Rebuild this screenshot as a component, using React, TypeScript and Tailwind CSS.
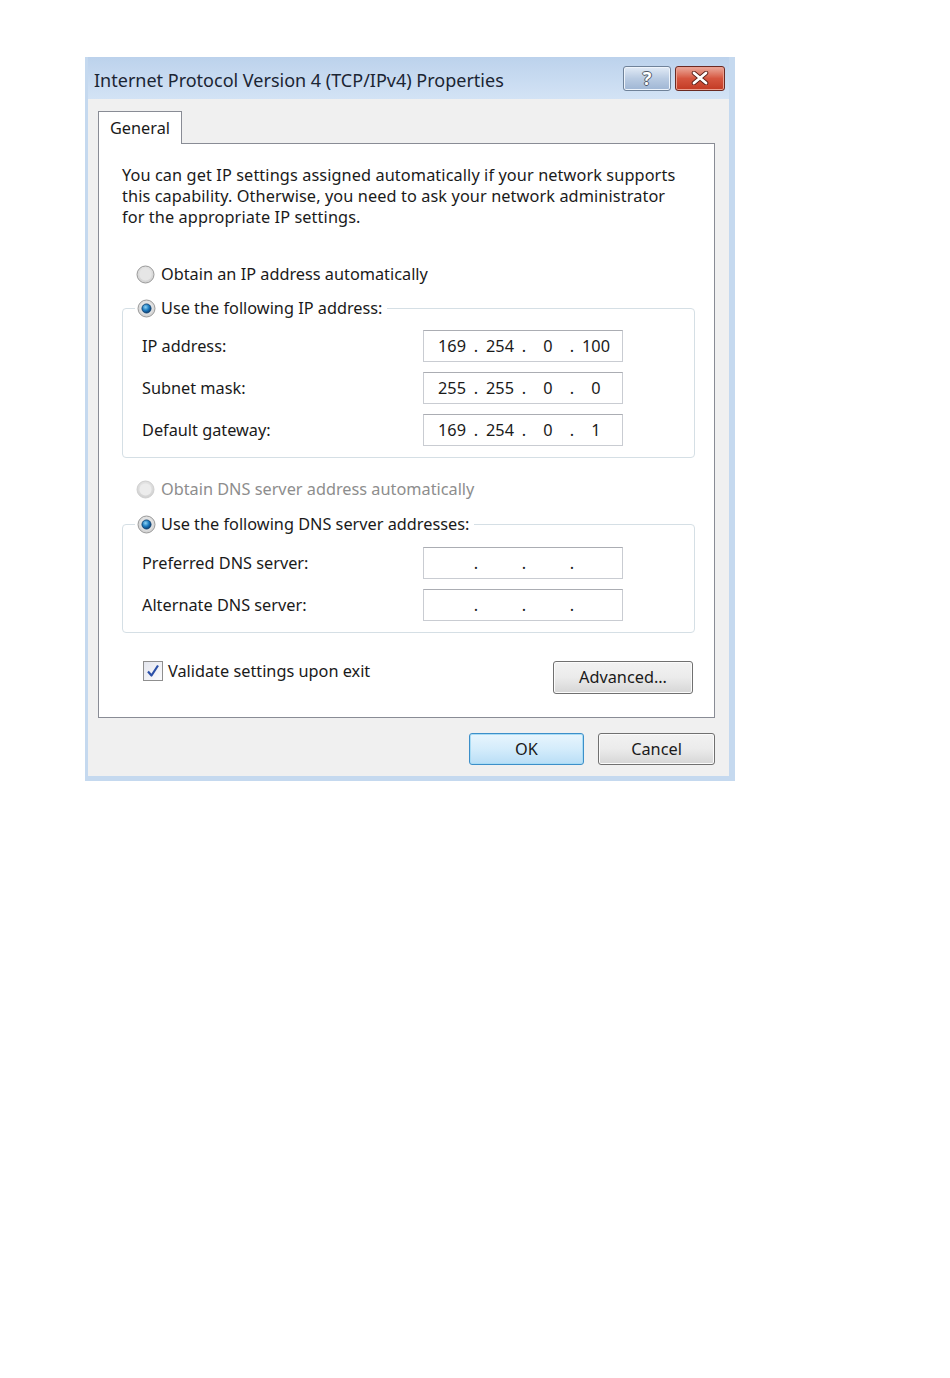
import React from 'react'

const font = { fontFamily: '"Noto Sans", "DejaVu Sans", sans-serif' }

function Radio({ checked, disabled }: { checked?: boolean; disabled?: boolean }) {
  return (
    <svg width="19" height="19" viewBox="0 0 19 19" className="shrink-0">
      <defs>
        <radialGradient id="rg-off" cx="50%" cy="40%" r="60%">
          <stop offset="0%" stopColor="#f4f4f4" />
          <stop offset="100%" stopColor="#cfcfcf" />
        </radialGradient>
        <radialGradient id="rg-dot" cx="40%" cy="35%" r="65%">
          <stop offset="0%" stopColor="#8fd3f5" />
          <stop offset="55%" stopColor="#1d7cc0" />
          <stop offset="100%" stopColor="#0b3f75" />
        </radialGradient>
      </defs>
      <circle cx="9.5" cy="9.5" r="8.5" fill="url(#rg-off)" stroke={disabled ? '#cfcfcf' : '#9a9a9a'} strokeWidth="1" />
      <circle cx="9.5" cy="9.5" r="6" fill={disabled ? '#ececec' : '#e6e6e6'} />
      {checked && <circle cx="9.5" cy="9.5" r="4.6" fill="url(#rg-dot)" stroke="#0c3c6a" strokeWidth="0.8" />}
    </svg>
  )
}

function IpBox({ parts }: { parts?: string[] }) {
  const vals = parts ?? ['', '', '', '']
  return (
    <div className="flex h-[32px] w-[200px] items-center border border-[#c9ccd2] border-t-[#abadb3] bg-white pl-[8px] text-[#1a1a1a]">
      {vals.map((v, i) => (
        <React.Fragment key={i}>
          <span className="w-[40px] text-center">{v}</span>
          {i < 3 && <span className="w-[8px] text-center">.</span>}
        </React.Fragment>
      ))}
    </div>
  )
}

function Row({ label, parts }: { label: string; parts?: string[] }) {
  return (
    <div className="flex h-[32px] items-center">
      <span className="w-[281px]">{label}</span>
      <IpBox parts={parts} />
    </div>
  )
}

function Btn({ children, primary, className }: { children: React.ReactNode; primary?: boolean; className?: string }) {
  return (
    <div
      className={
        'flex h-[32px] items-center justify-center rounded-[3px] border text-[16.3px] text-[#1a1a1a] ' +
        (primary
          ? 'border-[#3c8fc9] bg-gradient-to-b from-[#e8f5fd] via-[#d4ecfb] to-[#b9def6] shadow-[inset_0_0_0_1px_#a9dcf5] '
          : 'border-[#707070] bg-gradient-to-b from-[#f2f2f2] via-[#ebebeb] to-[#d6d6d6] shadow-[inset_0_0_0_1px_#fbfbfb] ') +
        (className ?? '')
      }
    >
      {children}
    </div>
  )
}

export default function App() {
  return (
    <div className="h-[1378px] w-[950px] bg-white pl-[85px] pt-[57px]" style={font}>
      <div className="flex h-[724px] w-[650px] flex-col bg-[#c5d9ef] pb-[5px] pl-[3px] pr-[6px]">
        {/* title bar */}
        <div className="flex h-[42px] items-center bg-gradient-to-b from-[#bcd2ec] to-[#d3e3f5]">
          <span className="pl-[6px] pt-[5px] text-[18px] text-[#1b2533]">Internet Protocol Version 4 (TCP/IPv4) Properties</span>
          <div className="ml-auto flex items-center gap-[4px] pr-[4px]">
            <div className="flex h-[25px] w-[48px] items-center justify-center rounded-[3px] border border-[#6f8299] bg-gradient-to-b from-[#e2ebf6] via-[#b9cbe2] to-[#9fb6d4] shadow-[inset_0_0_0_1px_#eef4fb]">
              <span className="text-[18px] font-bold leading-none text-white [text-shadow:1px_0_#4f5966,-1px_0_#4f5966,0_1px_#4f5966,0_-1px_#4f5966]">?</span>
            </div>
            <div className="flex h-[25px] w-[50px] items-center justify-center rounded-[3px] border border-[#6b2a22] bg-gradient-to-b from-[#e9a99c] via-[#d5553f] to-[#c23a23] shadow-[inset_0_0_0_1px_#eb9f8f]">
              <svg width="18" height="14" viewBox="0 0 18 14">
                <path d="M3 2 L15 12 M15 2 L3 12" stroke="#5a2018" strokeWidth="4.5" strokeLinecap="round" />
                <path d="M3 2 L15 12 M15 2 L3 12" stroke="#ffffff" strokeWidth="2.8" strokeLinecap="round" />
              </svg>
            </div>
          </div>
        </div>

        {/* body */}
        <div className="flex flex-1 flex-col bg-[#f0f0f0] pl-[10px] pr-[14px] pt-[12px] pb-[11px]">
          <div className="relative z-10 -mb-[1px] flex h-[33px] w-[84px] items-center border border-b-0 border-[#898c95] bg-white pl-[11px] text-[16.3px] text-[#1a1a1a]">
            General
          </div>
          <div className="flex h-[575px] flex-col border border-[#898c95] bg-white pl-[23px] pr-[19px] pt-[21px] text-[16.3px] text-[#1a1a1a]">
            <p className="leading-[21px] tracking-[0.1px]">
              You can get IP settings assigned automatically if your network supports
              <br />
              this capability. Otherwise, you need to ask your network administrator
              <br />
              for the appropriate IP settings.
            </p>

            <div className="mt-[34px] flex h-[24px] items-center gap-[6px] pl-[14px]">
              <Radio />
              <span>Obtain an IP address automatically</span>
            </div>

            <fieldset className="mt-[10px] rounded-[4px] border border-[#d5dfe5] pb-[11px]">
              <legend className="ml-[12px] flex h-[24px] items-center gap-[5px] pl-[2px] pr-[5px]">
                <Radio checked />
                <span>Use the following IP address:</span>
              </legend>
              <div className="mt-[10px] flex flex-col gap-[10px] pl-[19px]">
                <Row label="IP address:" parts={['169', '254', '0', '100']} />
                <Row label="Subnet mask:" parts={['255', '255', '0', '0']} />
                <Row label="Default gateway:" parts={['169', '254', '0', '1']} />
              </div>
            </fieldset>

            <div className="mt-[19px] flex h-[24px] items-center gap-[6px] pl-[14px] text-[#8d8d8d]">
              <Radio disabled />
              <span>Obtain DNS server address automatically</span>
            </div>

            <fieldset className="mt-[11px] rounded-[4px] border border-[#d5dfe5] pb-[11px]">
              <legend className="ml-[12px] flex h-[24px] items-center gap-[5px] pl-[2px] pr-[5px]">
                <Radio checked />
                <span>Use the following DNS server addresses:</span>
              </legend>
              <div className="mt-[11px] flex flex-col gap-[10px] pl-[19px]">
                <Row label="Preferred DNS server:" />
                <Row label="Alternate DNS server:" />
              </div>
            </fieldset>

            <div className="mt-[28px] flex items-start">
              <div className="ml-[21px] flex h-[20px] items-center gap-[5px]">
                <div className="flex h-[20px] w-[20px] items-center justify-center border border-[#8f8f8f] bg-gradient-to-br from-[#e4e6ee] to-[#fbfbfd]">
                  <svg width="14" height="14" viewBox="0 0 14 14">
                    <path d="M2 7.5 L5.5 11.5 L12 1.5" fill="none" stroke="#2b4fa8" strokeWidth="2.2" strokeLinejoin="round" />
                  </svg>
                </div>
                <span>Validate settings upon exit</span>
              </div>
              <Btn className="ml-auto mr-[2px] h-[33px] w-[140px]">Advanced...</Btn>
            </div>
          </div>

          <div className="mt-[15px] flex justify-end gap-[14px]">
            <Btn primary className="w-[115px]">OK</Btn>
            <Btn className="w-[117px]">Cancel</Btn>
          </div>
        </div>
      </div>
    </div>
  )
}
